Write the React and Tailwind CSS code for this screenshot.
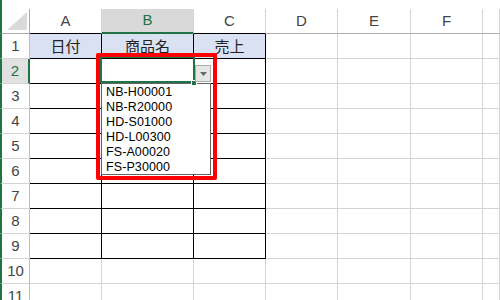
import React from 'react';

const cols = ['A', 'B', 'C', 'D', 'E', 'F', ''];
const rows = [1, 2, 3, 4, 5, 6, 7, 8, 9, 10, 11];
const headers = ['日付', '商品名', '売上'];
const items = ['NB-H00001', 'NB-R20000', 'HD-S01000', 'HD-L00300', 'FS-A00020', 'FS-P30000'];

const colHeaderClass = (i) => {
  if (i === 1) return 'h-[25px] bg-[#D9D9D9] border-r border-b-2 border-r-[#D4D4D4] border-b-[#217346] flex items-center justify-center';
  if (i === 0 || i === 2) return 'h-[25px] bg-white border-r border-b border-r-[#D4D4D4] border-b-black flex items-center justify-center';
  return 'h-[25px] bg-white border-r border-b border-r-[#D4D4D4] border-b-[#ABABAB] flex items-center justify-center';
};

const cellClass = (r, c) => {
  const inTable = r <= 9 && c <= 2;
  if (inTable && r === 1) return 'h-[25px] bg-[#D9E1F2] border-r border-b border-black flex items-center justify-center';
  if (inTable) return 'h-[25px] bg-white border-r border-b border-black';
  return 'h-[25px] bg-white border-r border-b border-[#D4D4D4]';
};

const App = () => {
  return (
    <div className="relative w-[500px] h-[300px] overflow-hidden bg-white font-['Liberation_Sans',Arial,sans-serif]">
      <div className="grid grid-cols-[30px_72px_92px_72px_72px_73px_72px_1fr]">
        {/* top gap above the column headers */}
        <div className="h-[9px] border-l-2 border-l-[#217346]"></div>
        {cols.map((c, i) => <div key={'gap' + i} className="h-[9px]"></div>)}

        {/* corner + column headers */}
        <div className="h-[25px] border-l-2 border-l-[#217346] border-r border-b border-r-[#ABABAB] border-b-[#ABABAB] relative">
          <svg className="absolute right-[2px] bottom-[3px]" width="20" height="18" viewBox="0 0 20 18">
            <polygon points="20,0 20,18 0,18" fill="#DADADA" />
          </svg>
        </div>
        {cols.map((c, i) => (
          <div key={'h' + i} className={colHeaderClass(i)}>
            <span className={i === 1 ? 'text-[15px] text-[#217346]' : 'text-[15px] text-[#444]'}>{c}</span>
          </div>
        ))}

        {rows.map((r) => (
          <React.Fragment key={r}>
            <div className={r === 2
              ? 'h-[25px] bg-[#E1E1E1] border-l-2 border-l-[#217346] border-r-2 border-r-[#217346] border-b border-b-[#D4D4D4] flex items-center justify-center text-[15px] text-[#217346]'
              : 'h-[25px] bg-white border-l-2 border-l-[#217346] border-r border-r-[#BDBDBD] border-b border-b-[#D4D4D4] flex items-center justify-center text-[15px] text-[#444]'}>
              {r}
            </div>
            {cols.map((c, i) => (
              <div key={c + r + i} className={cellClass(r, i)}>
                {r === 1 && i <= 2 && (
                  <span className="text-[15px] text-[#222] font-['Noto_Sans_CJK_JP',sans-serif]">{headers[i]}</span>
                )}
              </div>
            ))}
          </React.Fragment>
        ))}
      </div>

      {/* active cell B2 */}
      <div className="absolute left-[100px] top-[56px] w-[95px] h-[27px] border-2 border-[#217346]"></div>

      {/* validation list */}
      <div className="absolute left-[101px] top-[83px] w-[110px] h-[92px] bg-white border border-[#646464] pt-[1px] pl-[4px]">
        {items.map((it) => (
          <div key={it} className="h-[15px] leading-[15px] text-[12.5px] tracking-[0.1px] text-black">{it}</div>
        ))}
      </div>

      {/* fill handle */}
      <div className="absolute left-[191px] top-[80px] w-[6px] h-[6px] bg-[#217346] border border-white"></div>

      {/* dropdown button */}
      <div className="absolute left-[195px] top-[65px] w-[16px] h-[17px] bg-[#E6E6E6] border border-[#ABABAB] flex items-center justify-center">
        <svg width="7" height="4" viewBox="0 0 7 4">
          <polygon points="0,0 7,0 3.5,4" fill="#666" />
        </svg>
      </div>

      {/* red highlight */}
      <div className="absolute left-[96px] top-[53px] w-[121px] h-[127px] border-4 border-[#FF0000] rounded-[2px]"></div>
    </div>
  );
};

export default App;
